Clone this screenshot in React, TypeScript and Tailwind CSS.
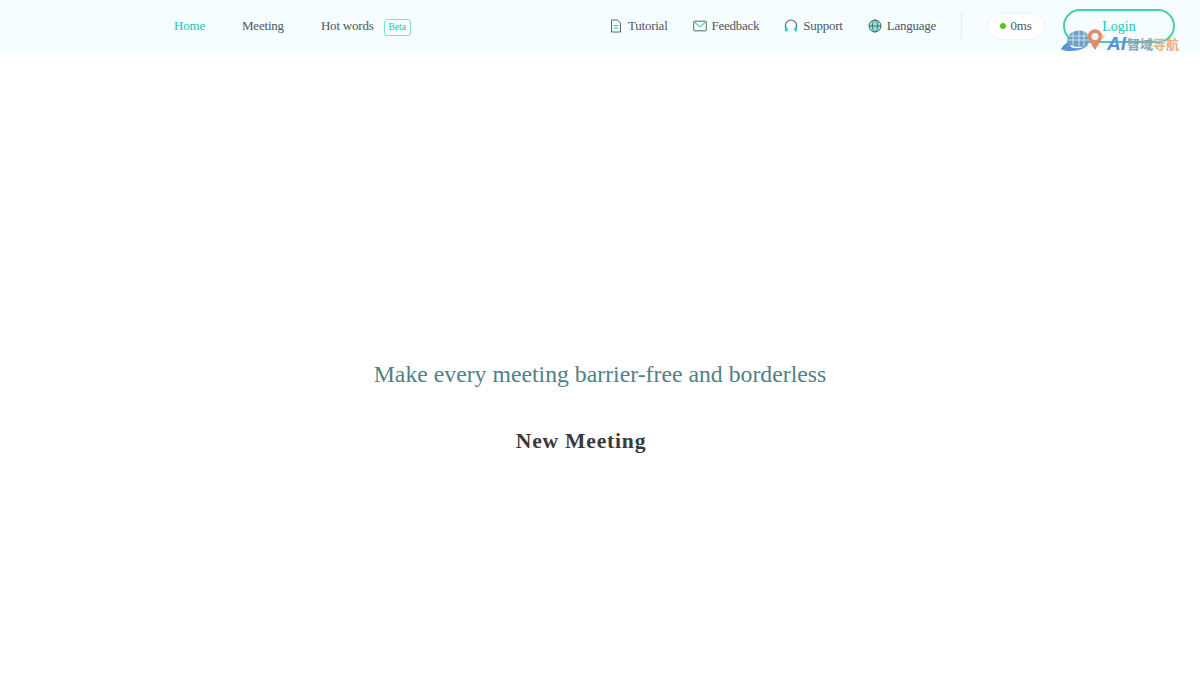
const Logo = () => (
  <div className="absolute left-[1061px] top-[29px] flex h-[23px] items-center">
    <svg width="46" height="23" viewBox="0 0 46 23">
      <path d="M0 20 Q4 13 10 13 Q7 18 13 19 Q22 20 28 15 Q22 22 10 22 Q2 22 0 20Z" fill="#5b95dc" />
      <path d="M6 14 Q5 5 14 2 Q23 0 27 6 Q29 12 26 17 Q14 20 6 14Z" fill="#6f9fc4" />
      <path d="M7 7H27M6 11H28M12 3V17M18 1V18M23 2V17" stroke="#cfeaf2" strokeWidth="0.9" fill="none" />
      <path d="M34 21 L28 11.5 A7.2 7.2 0 1 1 40 11.5Z" fill="#e58a68" />
      <circle cx="34" cy="7.5" r="3.6" fill="#eaf8fb" />
      <path d="M42 5l.8 2 2 .8-2 .8-.8 2-.8-2-2-.8 2-.8z" fill="#f3c583" />
    </svg>
    <span className="mt-[5px] font-['Liberation_Sans',sans-serif] text-[19px] leading-none font-bold text-[#5c8fdb] italic">AI</span>
    <span className="mt-[5px] ml-[1px] font-['Noto_Sans_CJK_SC',sans-serif] text-[13px] leading-none font-bold text-[#8aa6ae]">智域</span>
    <span className="mt-[5px] font-['Noto_Sans_CJK_SC',sans-serif] text-[13px] leading-none font-bold text-[#efab84]">导航</span>
  </div>
);

const DocIcon = () => (
  <svg width="12" height="14" viewBox="0 0 12 14" fill="none">
    <path d="M1.5 1h6l3 3v9h-9z" stroke="#5a6668" strokeWidth="1" strokeLinejoin="round" />
    <path d="M3.5 6.5h5M3.5 9h5" stroke="#2fd0bc" strokeWidth="1.2" />
  </svg>
);

const MailIcon = () => (
  <svg width="14" height="12" viewBox="0 0 14 12" fill="none">
    <rect x="0.7" y="1.2" width="12.6" height="9.6" rx="0.8" stroke="#5a6668" strokeWidth="1" />
    <path d="M1.5 2.2L7 6.8l5.5-4.6" stroke="#2fd0bc" strokeWidth="1.1" />
  </svg>
);

const HeadsetIcon = () => (
  <svg width="14" height="14" viewBox="0 0 14 14" fill="none">
    <path d="M1.5 9V6.5a5.5 5.5 0 0 1 11 0V9" stroke="#4f5f62" strokeWidth="1.1" />
    <rect x="0.8" y="8" width="2.8" height="4.6" rx="1.3" fill="#2fd0bc" />
    <rect x="10.4" y="8" width="2.8" height="4.6" rx="1.3" fill="#2fd0bc" />
  </svg>
);

const GlobeIcon = () => (
  <svg width="14" height="14" viewBox="0 0 14 14" fill="none">
    <circle cx="7" cy="7" r="6" fill="#8ee6da" stroke="#47666a" strokeWidth="1" />
    <ellipse cx="7" cy="7" rx="2.6" ry="6" stroke="#47666a" strokeWidth="0.9" />
    <path d="M1 7h12" stroke="#47666a" strokeWidth="0.9" />
  </svg>
);

const NavItem = ({ icon, label, gap }: { icon: React.ReactNode; label: string; gap: string }) => (
  <div className={`flex items-center ${gap}`}>
    {icon}
    <span>{label}</span>
  </div>
);

export default function App() {
  return (
    <div className="relative h-[700px] w-[1200px] overflow-hidden bg-white font-['Liberation_Serif',serif]">
      <header className="flex h-[52px] items-center bg-[#f5fdff] pr-[25px] pl-[174px] text-[13px] tracking-[-0.2px] text-[#50585b]">
        <nav className="flex items-center">
          <span className="text-[#19c5b0]">Home</span>
          <span className="ml-[37px]">Meeting</span>
          <span className="ml-[37px]">Hot words</span>
          <span className="mt-[3px] ml-[10px] flex h-[17px] w-[27px] items-center justify-center rounded-[3px] border border-[#7fdfd2] text-[9.5px] tracking-normal text-[#19c5b0]">
            Beta
          </span>
        </nav>
        <div className="ml-auto flex items-center">
          <div className="flex items-center gap-[25px] tracking-[-0.25px]">
            <NavItem icon={<DocIcon />} label="Tutorial" gap="gap-[6px]" />
            <NavItem icon={<MailIcon />} label="Feedback" gap="gap-[5px]" />
            <NavItem icon={<HeadsetIcon />} label="Support" gap="gap-[5px]" />
            <NavItem icon={<GlobeIcon />} label="Language" gap="gap-[5px]" />
          </div>
          <div className="ml-[25px] h-[26px] w-px bg-[#e3ecec]" />
          <div className="ml-[25px] flex h-[27px] w-[58px] items-center justify-center gap-[4px] rounded-full border border-[#eef3f3] bg-white">
            <span className="h-[6px] w-[6px] rounded-full bg-[#52c41a]" />
            0ms
          </div>
          <button className="ml-[18px] h-[34px] w-[112px] rounded-full border-2 border-[#4acbb6] text-[14px] tracking-normal text-[#19c5b0]">
            Login
          </button>
        </div>
      </header>
      <Logo />
      <main className="flex flex-col items-center pt-[307px]">
        <h1 className="text-[23.75px] leading-[30px] text-[#538083]">Make every meeting barrier-free and borderless</h1>
        <div className="mt-[37px] mr-[38px] text-[21.6px] leading-[30px] font-bold tracking-[0.8px] text-[#3a3a3a]">
          New Meeting
        </div>
      </main>
    </div>
  );
}
